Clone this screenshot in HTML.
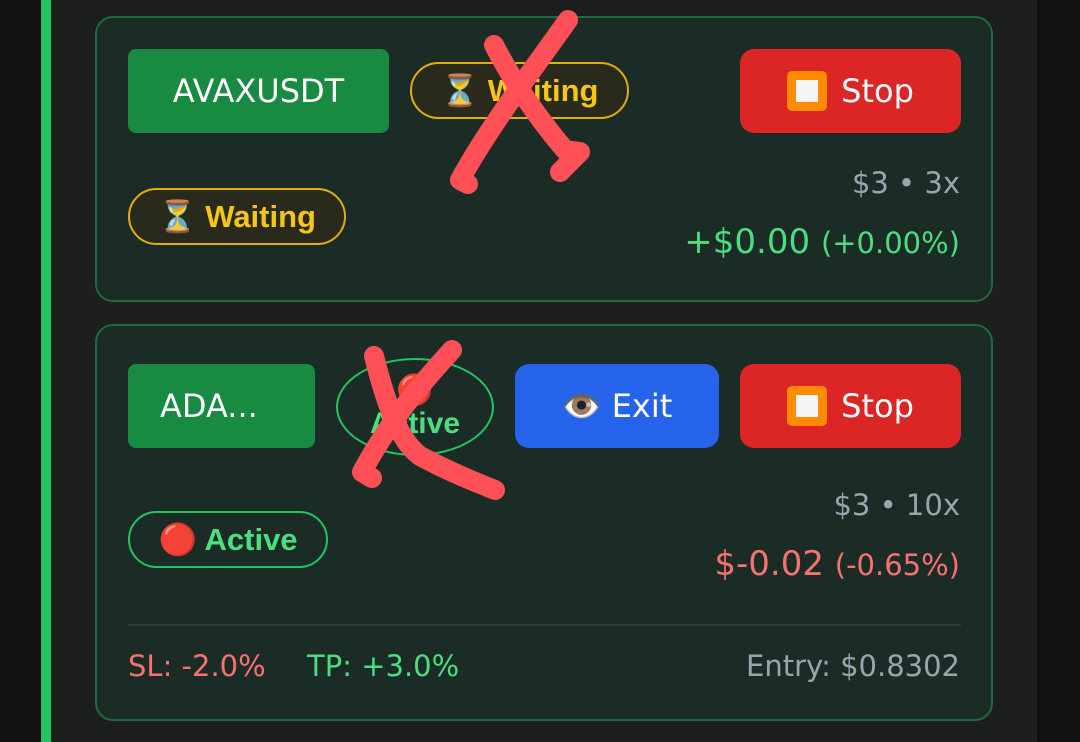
<!DOCTYPE html>
<html><head><meta charset="utf-8"><style>
*{margin:0;padding:0;box-sizing:border-box}
body{width:1080px;height:742px;overflow:hidden;background:#1c1f1e;font-family:"DejaVu Sans","Liberation Sans",sans-serif;position:relative}
.a{position:absolute}
.card{position:absolute;left:95px;width:898px;background:#1b2b26;border:2px solid #1f6b3d;border-radius:18px}
.sym{position:absolute;background:#188a42;color:#fff;border-radius:8px;font-size:32px;display:flex;align-items:center;justify-content:center}
.pill{position:absolute;border:2px solid;border-radius:40px;display:flex;align-items:center;justify-content:center;font-size:31px;font-weight:bold;font-family:"Liberation Sans",sans-serif}
.w{border-color:#e3ad0c;color:#f5c518;background:#2a2a1c}
.g{border-color:#22c55e;color:#4ade80;background:#1b2b26}
.btn{position:absolute;border-radius:14px;color:#fff;font-size:32px;display:flex;align-items:center;justify-content:center;gap:14px}
.sq{width:40px;height:40px;background:#ff8c00;border-radius:5px;display:flex;align-items:center;justify-content:center}
.sq i{width:22px;height:22px;background:#f5f5f5;display:block}
.r{position:absolute;right:120px;text-align:right;white-space:nowrap}
</style></head><body>
<div class="a" style="left:0;top:0;width:41px;height:742px;background:#111"></div>
<div class="a" style="left:41px;top:0;width:10px;height:742px;background:#22c55e"></div>
<div class="a" style="left:1037px;top:0;width:43px;height:742px;background:#111"></div>

<div class="card" style="top:16px;height:286px"></div>
<div class="sym" style="left:128px;top:49px;width:261px;height:84px">AVAXUSDT</div>
<div class="pill w" style="left:410px;top:62px;width:219px;height:57px">⏳ Waiting</div>
<div class="btn" style="left:740px;top:49px;width:221px;height:84px;background:#dc2626"><span class="sq"><i></i></span>Stop</div>
<div class="pill w" style="left:128px;top:188px;width:218px;height:57px">⏳ Waiting</div>
<div class="r" style="top:166px;font-size:29px;color:#9ca3af">$3 • 3x</div>
<div class="r" style="top:222px;font-size:34px;color:#4ade80">+$0.00 <span style="font-size:29px">(+0.00%)</span></div>

<div class="card" style="top:324px;height:397px"></div>
<div class="sym" style="left:128px;top:364px;width:187px;height:84px;justify-content:flex-start;padding-left:32px">ADA...</div>
<div class="pill g" style="left:336px;top:358px;width:158px;height:98px;border-radius:50%;font-size:30px;line-height:1.1;text-align:center;flex-direction:column">🔴<br>Active</div>
<div class="btn" style="left:515px;top:364px;width:204px;height:84px;background:#2563eb">👁️ Exit</div>
<div class="btn" style="left:740px;top:364px;width:221px;height:84px;background:#dc2626"><span class="sq"><i></i></span>Stop</div>
<div class="pill g" style="left:128px;top:511px;width:200px;height:57px">🔴 Active</div>
<div class="r" style="top:488px;font-size:29px;color:#9ca3af">$3 • 10x</div>
<div class="r" style="top:544px;font-size:34px;color:#f87171">$-0.02 <span style="font-size:29px">(-0.65%)</span></div>
<div class="a" style="left:128px;top:624px;width:833px;height:2px;background:#2c3a36"></div>
<div class="a" style="left:128px;top:649px;font-size:29px;color:#f87171">SL: -2.0%</div>
<div class="a" style="left:307px;top:649px;font-size:29px;color:#4ade80">TP: +3.0%</div>
<div class="r" style="top:649px;font-size:29px;color:#9ca3af">Entry: $0.8302</div>

<svg class="a" style="left:0;top:0" width="1080" height="742">
<g fill="none" stroke="#ff5057" stroke-width="20" stroke-linecap="round" stroke-linejoin="round">
<path d="M568 20 C540 60 490 125 460 180 L468 184"/>
<path d="M494 45 C520 95 548 130 565 150 L580 152 L560 172"/>
<path d="M452 350 C420 385 390 420 362 472 L372 478"/>
<path d="M374 356 C385 400 398 440 420 456 C450 472 475 482 495 490"/>
</g></svg>
</body></html>
